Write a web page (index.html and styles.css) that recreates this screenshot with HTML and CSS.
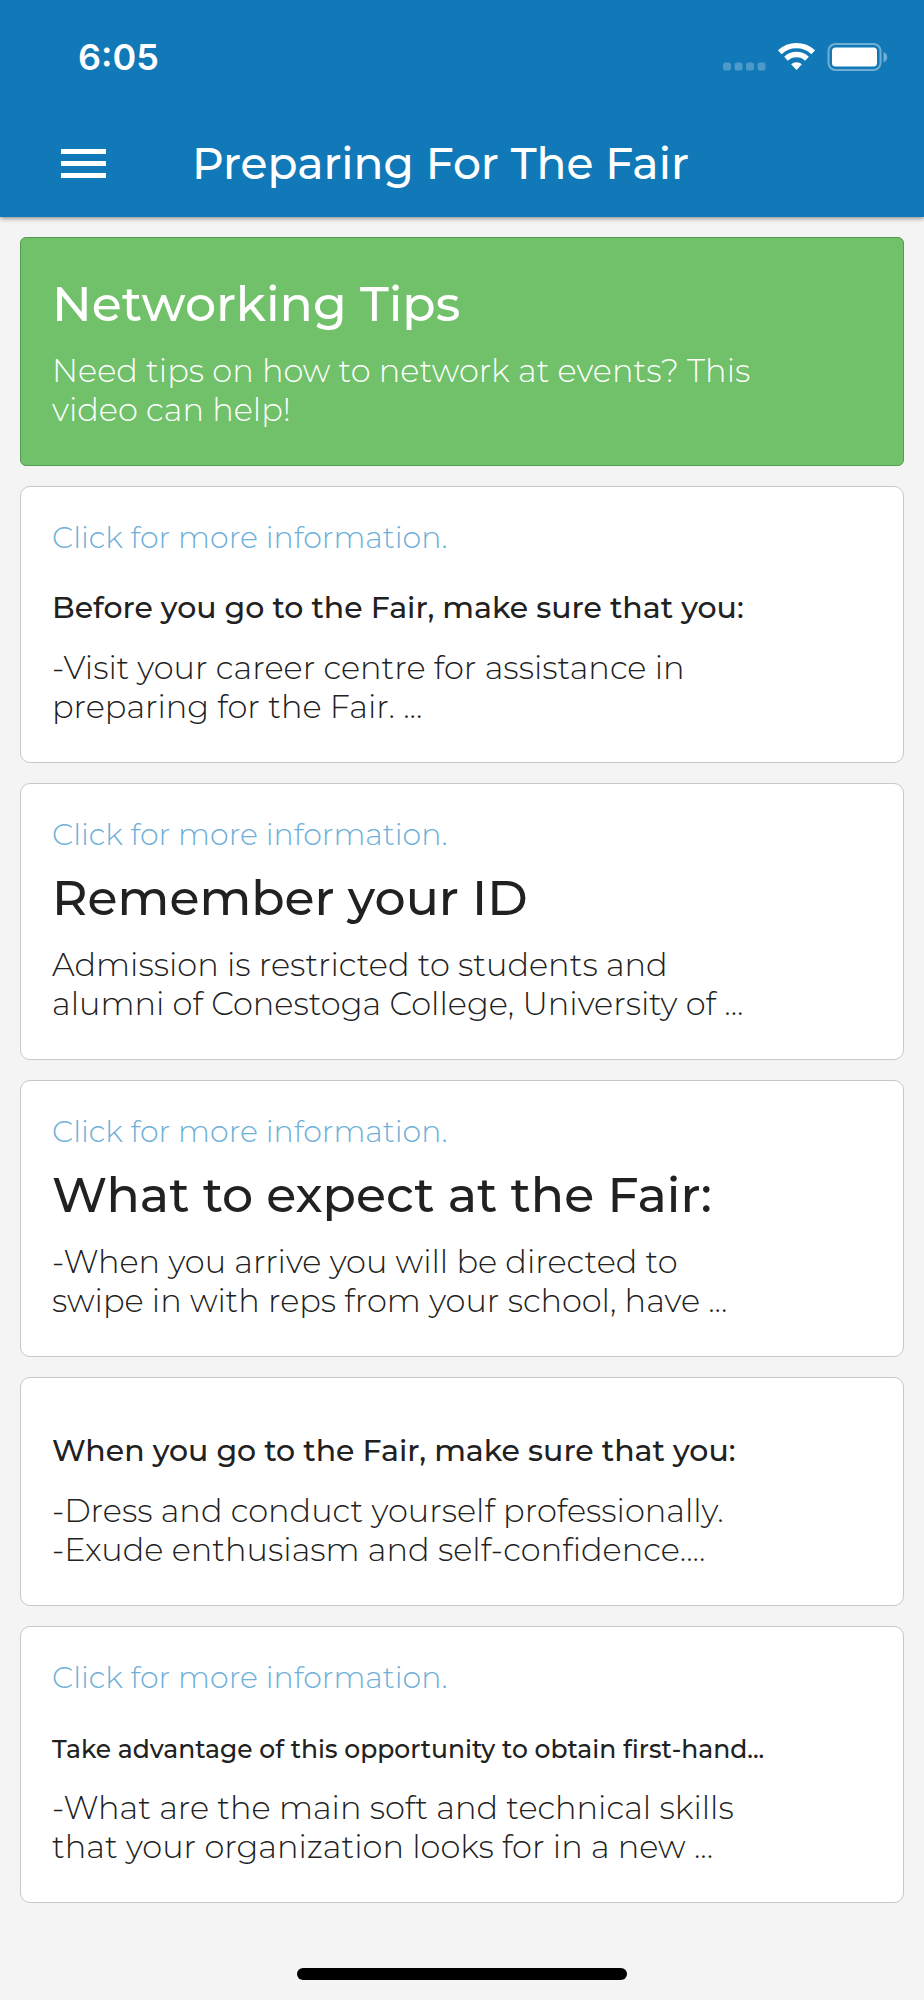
FILE: index.html
```html
<!DOCTYPE html>
<html lang="en">
<head>
    <meta charset="UTF-8">
    <meta name="viewport" content="width=device-width, initial-scale=1.0">
    <title>Preparing For The Fair</title>
    <link rel="stylesheet" href="styles.css">
</head>
<body>
    <header class="app-header">
        <div class="status-bar">
            <span class="time">6:05</span>
            <svg class="status-icons" width="166" height="30" viewBox="0 0 166 30" aria-hidden="true">
                <!-- Signal -->
                <g fill="#fff" fill-opacity="0.25">
                    <rect x="1" y="20.5" width="8" height="8" rx="2.5"/>
                    <rect x="12.5" y="20.5" width="8" height="8" rx="2.5"/>
                    <rect x="24" y="20.5" width="8" height="8" rx="2.5"/>
                    <rect x="35.5" y="20.5" width="8" height="8" rx="2.5"/>
                </g>
                <!-- Wifi -->
                <g fill="none" stroke="#fff" stroke-width="5.4">
                    <path d="M57.8 10.2a24.4 24.4 0 0 1 33.4 0"/>
                    <path d="M64 16.7a15.4 15.4 0 0 1 21 0"/>
                </g>
                <path d="M74.5 28l-5.4-5.7a8 8 0 0 1 10.8 0z" fill="#fff"/>
                <!-- Battery -->
                <rect x="106.5" y="2" width="52" height="26" rx="7" fill="none" stroke="#fff" stroke-opacity="0.4" stroke-width="2"/>
                <rect x="110" y="5.5" width="45" height="19" rx="3.5" fill="#fff"/>
                <path d="M161.5 10c5 1.8 5 8.5 0 10.3z" fill="#fff" fill-opacity="0.4"/>
            </svg>
        </div>
        <div class="toolbar">
            <button class="menu-button" type="button" aria-label="Menu">
                <svg width="45" height="30" viewBox="0 0 45 30" aria-hidden="true">
                    <path d="M0 2.5h45M0 14.5h45M0 26.5h45" stroke="#fff" stroke-width="5"/>
                </svg>
            </button>
            <h1>Preparing For The Fair</h1>
        </div>
    </header>

    <main class="cards">
        <section class="card card-featured">
            <h2>Networking Tips</h2>
            <p>Need tips on how to network at events? This<br>video can help!</p>
        </section>

        <section class="card">
            <a class="more" href="#">Click for more information.</a>
            <h2><span class="medium">Before you go to the Fair, make sure that you:</span></h2>
            <p>-Visit your career centre for assistance in<br>preparing for the Fair. ...</p>
        </section>

        <section class="card">
            <a class="more" href="#">Click for more information.</a>
            <h2>Remember your ID</h2>
            <p>Admission is restricted to students and<br>alumni of Conestoga College, University of ...</p>
        </section>

        <section class="card">
            <a class="more" href="#">Click for more information.</a>
            <h2>What to expect at the Fair:</h2>
            <p>-When you arrive you will be directed to<br>swipe in with reps from your school, have ...</p>
        </section>

        <section class="card">
            <h2><span class="medium">When you go to the Fair, make sure that you:</span></h2>
            <p>-Dress and conduct yourself professionally.<br>-Exude enthusiasm and self-confidence....</p>
        </section>

        <section class="card">
            <a class="more" href="#">Click for more information.</a>
            <h2><span class="small">Take advantage of this opportunity to obtain first-hand...</span></h2>
            <p>-What are the main soft and technical skills<br>that your organization looks for in a new ...</p>
        </section>
    </main>

    <div class="home-indicator"></div>
</body>
</html>
```

FILE: styles.css
```css
:root {
    --primary-color: #1179b7;
    --link-color: #6fb0d8;
    --featured-color: #70c16a;
    --featured-border: #559b51;
    --text-color: #212121;
    --background-color: #f4f4f4;
    --border-color: #c8c8c8;
}

*, *::before, *::after {
    box-sizing: border-box;
    margin: 0;
    padding: 0;
}

body {
    font-family: Montserrat, Inter, sans-serif;
    color: var(--text-color);
    background-color: var(--background-color);
}

.app-header {
    background: var(--primary-color);
    color: white;
    box-shadow: 0 1px 5px rgba(0, 0, 0, 0.5);
}

.status-bar {
    display: flex;
    justify-content: space-between;
    align-items: center;
    padding: 36px 36px 32px 78px;
}

.time {
    font-family: Inter, sans-serif;
    font-size: 36px;
    font-weight: 600;
    line-height: 42px;
}

.toolbar {
    display: flex;
    align-items: center;
    gap: 86px;
    padding: 12px 61px;
}

.menu-button {
    display: flex;
    background: none;
    border: none;
    cursor: pointer;
}

h1 {
    font-size: 44px;
    font-weight: 500;
    line-height: 83px;
}

.cards {
    display: flex;
    flex-direction: column;
    gap: 20px;
    padding: 20px;
}

.card {
    background: white;
    border: 1px solid var(--border-color);
    border-radius: 10px;
    padding: 33px 31px 36px;
}

.card-featured {
    background: var(--featured-color);
    border-color: var(--featured-border);
    border-radius: 6px;
    color: white;
}

.more {
    display: block;
    width: fit-content;
    margin-bottom: 12px;
    color: var(--link-color);
    font-size: 30px;
    font-weight: 300;
    line-height: 36px;
    text-decoration: none;
}

.more:hover {
    text-decoration: underline;
}

h2 {
    margin-bottom: 14px;
    font-size: 49px;
    font-weight: 500;
    line-height: 66px;
}

.medium {
    font-size: 30px;
    line-height: 36px;
}

.small {
    font-size: 25px;
    line-height: 36px;
}

.card p {
    font-size: 32px;
    font-weight: 300;
    line-height: 39px;
}

.home-indicator {
    width: 330px;
    height: 12px;
    margin: 45px auto 20px;
    border-radius: 6px;
    background: black;
}
```
